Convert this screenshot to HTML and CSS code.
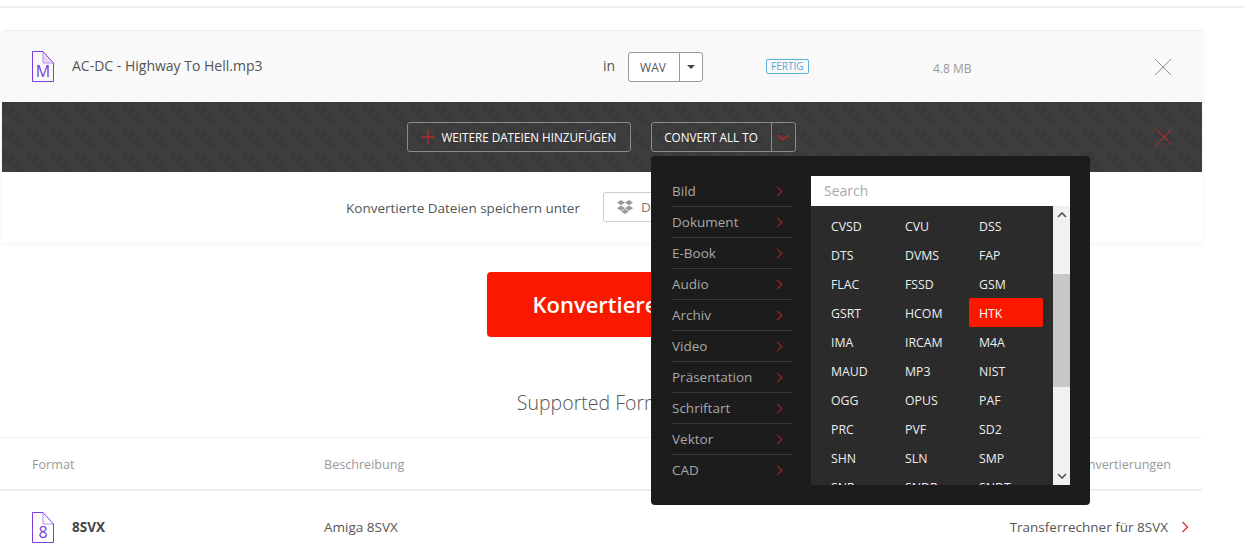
FILE: index.html
```html
<!DOCTYPE html>
<html lang="de">
<head>
    <meta charset="UTF-8">
    <title>Konvertieren</title>
    <link rel="stylesheet" href="styles.css">
</head>
<body>
    <div class="topbar"></div>

    <section class="uploader">
        <div class="file-row">
            <svg class="file-icon" width="22" height="31" viewBox="0 0 22 31">
                <path d="M11 1 L21 12 H11 Z" fill="#e6d9fa"/>
                <path d="M11 .5 V12 H21.5" fill="none" stroke="#b795ee"/>
                <path d="M.5.5 H11 L21.5 12 V30.5 H.5 Z" fill="none" stroke="#7a3de0"/>
                <text x="11" y="26" text-anchor="middle" class="file-icon-text">M</text>
            </svg>
            <span class="file-name">AC-DC - Highway To Hell.mp3</span>
            <span class="file-in">in</span>
            <div class="select-btn">
                <span class="select-value">WAV</span>
                <span class="select-caret"><i></i></span>
            </div>
            <span class="badge">FERTIG</span>
            <span class="file-size">4.8 MB</span>
            <svg class="close-icon" width="18" height="18" viewBox="0 0 18 18"><path d="M1 1 L17 17 M17 1 L1 17" stroke="#8f8f8f" fill="none"/></svg>
        </div>

        <div class="action-bar">
            <div class="action-buttons">
                <button class="dark-btn add-btn">
                    <svg width="14" height="14" viewBox="0 0 14 14"><path d="M7 0 V14 M0 7 H14" stroke="#d8262a" fill="none"/></svg>
                    WEITERE DATEIEN HINZUFÜGEN
                </button>
                <div class="dark-btn convert-btn">
                    <span class="convert-label">CONVERT ALL TO</span>
                    <span class="convert-caret">
                        <svg width="12" height="7" viewBox="0 0 12 7"><path d="M1 1 L6 6 L11 1" stroke="#c9242a" stroke-width="1.4" fill="none"/></svg>
                    </span>
                </div>
            </div>
            <svg class="close-icon" width="18" height="18" viewBox="0 0 18 18"><path d="M1 1 L17 17 M17 1 L1 17" stroke="#c9282c" fill="none"/></svg>
        </div>

        <div class="save-row">
            <span class="save-label">Konvertierte Dateien speichern unter</span>
            <button class="save-btn">
                <svg width="16" height="14" viewBox="0 0 16 14"><path d="M4 0 L8 2.6 L4 5.2 L0 2.6 Z M12 0 L16 2.6 L12 5.2 L8 2.6 Z M4 5.6 L8 8.2 L4 10.8 L0 8.2 Z M12 5.6 L16 8.2 L12 10.8 L8 8.2 Z M4.2 11.4 L8 8.9 L11.8 11.4 L8 14 Z" fill="#999"/></svg>
                Dropbox
            </button>
        </div>
    </section>

    <div class="convert-wrap">
        <button class="convert-main">Konvertieren</button>
    </div>

    <h2 class="formats-title">Supported Formats</h2>

    <section class="formats">
        <div class="formats-head">
            <span>Format</span>
            <span>Beschreibung</span>
            <span class="formats-right">Konvertierungen</span>
        </div>
        <div class="formats-row">
            <span class="format-name">
                <svg class="file-icon" width="22" height="31" viewBox="0 0 22 31">
                    <path d="M11 .5 V12 H21.5" fill="none" stroke="#b795ee"/>
                    <path d="M.5.5 H11 L21.5 12 V30.5 H.5 Z" fill="none" stroke="#7a3de0"/>
                    <text x="11" y="26" text-anchor="middle" class="file-icon-text">8</text>
                </svg>
                <b>8SVX</b>
            </span>
            <span>Amiga 8SVX</span>
            <span class="formats-right">Transferrechner für 8SVX
                <svg width="8" height="12" viewBox="0 0 8 12"><path d="M1.5 1 L6.5 6 L1.5 11" stroke="#d9363a" stroke-width="1.4" fill="none"/></svg>
            </span>
        </div>
    </section>

    <!-- dropdown opened from CONVERT ALL TO -->
    <div class="format-menu">
        <ul class="cat-list">
            <li>Bild</li>
            <li>Dokument</li>
            <li>E-Book</li>
            <li>Audio</li>
            <li>Archiv</li>
            <li>Video</li>
            <li>Präsentation</li>
            <li>Schriftart</li>
            <li>Vektor</li>
            <li>CAD</li>
        </ul>
        <div class="menu-right">
            <div class="menu-search">Search</div>
            <div class="menu-body">
                <div class="ext-grid">
                    <span>CVSD</span><span>CVU</span><span>DSS</span>
                    <span>DTS</span><span>DVMS</span><span>FAP</span>
                    <span>FLAC</span><span>FSSD</span><span>GSM</span>
                    <span>GSRT</span><span>HCOM</span><span class="active">HTK</span>
                    <span>IMA</span><span>IRCAM</span><span>M4A</span>
                    <span>MAUD</span><span>MP3</span><span>NIST</span>
                    <span>OGG</span><span>OPUS</span><span>PAF</span>
                    <span>PRC</span><span>PVF</span><span>SD2</span>
                    <span>SHN</span><span>SLN</span><span>SMP</span>
                    <span>SNR</span><span>SNDR</span><span>SNDT</span>
                </div>
                <div class="scrollbar">
                    <svg width="10" height="6" viewBox="0 0 10 6"><path d="M1 5 L5 1 L9 5" stroke="#505050" stroke-width="1.6" fill="none"/></svg>
                    <div class="scroll-thumb"></div>
                    <svg class="scroll-down" width="10" height="6" viewBox="0 0 10 6"><path d="M1 1 L5 5 L9 1" stroke="#505050" stroke-width="1.6" fill="none"/></svg>
                </div>
            </div>
        </div>
    </div>
</body>
</html>
```

FILE: styles.css
```css
* {
    box-sizing: border-box;
}
html, body {
    height: 100%;
}
body {
    position: relative;
    margin: 0;
    overflow: hidden;
    background-color: #fff;
    font-family: "Open Sans", sans-serif;
    font-size: 13px;
    color: #555;
}
.topbar {
    height: 8px;
    border-bottom: 2px solid #eee;
}
.uploader {
    width: 1200px;
    margin: 22px 0 0 2px;
    box-shadow: 0 2px 6px rgba(0, 0, 0, 0.05);
}

/* file row */
.file-row {
    display: flex;
    align-items: center;
    height: 72px;
    padding: 0 30px;
    background-color: #f9f9f9;
    border-top: 1px solid #f0f0f0;
}
.file-icon {
    flex: none;
}
.file-icon-text {
    font-family: "Open Sans", sans-serif;
    font-size: 16px;
    fill: #7a3de0;
}
.file-name {
    flex: none;
    width: 551px;
    padding-left: 18px;
    margin-top: -2px;
    margin-right: -2px;
    font-size: 14px;
    color: #555;
}
.file-in {
    width: 25px;
    margin-top: -3px;
    font-size: 14px;
}
.select-btn {
    display: flex;
    width: 75px;
    height: 30px;
    background-color: #fff;
    border: 1px solid #999;
    border-radius: 3px;
}
.select-value {
    width: 50px;
    padding-right: 2px;
    font-size: 12px;
    line-height: 29px;
    text-align: center;
}
.select-caret {
    display: flex;
    flex: 1;
    align-items: center;
    justify-content: center;
    border-left: 1px solid #999;
}
.select-caret i {
    border-top: 4px solid #444;
    border-left: 4px solid transparent;
    border-right: 4px solid transparent;
}
.badge {
    margin-left: 63px;
    padding: 0 4.5px 0 4px;
    height: 15px;
    font-size: 10px;
    line-height: 13px;
    color: #5ba5c9;
    border: 1px solid #5bb2d9;
    border-radius: 2px;
}
.file-size {
    margin-left: 124px;
    margin-top: 3px;
    font-size: 12px;
    color: #999;
}
.file-row .close-icon {
    margin-left: auto;
    margin-right: 0;
}

/* dark bar */
.action-bar {
    display: grid;
    grid-template-columns: 1fr auto 1fr;
    align-items: center;
    height: 70px;
    padding: 0 29px 0 27px;
    background-color: #3a3a3a;
    background-image:
        radial-gradient(circle at 12px 12px, transparent 3px, #363636 3.5px, #363636 4.5px, transparent 5px),
        repeating-conic-gradient(#3e3e3e 0 25%, #3a3a3a 0 50%);
    background-size: 24px 24px, 24px 24px;
}
.action-buttons {
    grid-column: 2;
    display: flex;
    gap: 20px;
}
.action-bar .close-icon {
    justify-self: end;
}
.dark-btn {
    display: flex;
    align-items: center;
    height: 30px;
    padding: 0;
    background-color: transparent;
    border: 1px solid #8a8a8a;
    border-radius: 3px;
    font-family: inherit;
    font-size: 11.7px;
    color: #fff;
}
.add-btn {
    gap: 7px;
    width: 224px;
    padding-left: 13px;
}
.convert-btn {
    width: 145px;
}
.convert-label {
    width: 119px;
    text-align: center;
}
.convert-caret {
    display: flex;
    flex: 1;
    align-items: center;
    justify-content: center;
    height: 100%;
    border-left: 1px solid #8a8a8a;
}

/* save row */
.save-row {
    display: flex;
    align-items: center;
    justify-content: center;
    gap: 23px;
    height: 70px;
    background-color: #fff;
}
.save-label {
    padding-top: 2px;
    font-size: 13.5px;
}
.save-btn {
    display: flex;
    align-items: center;
    gap: 8px;
    width: 255px;
    height: 30px;
    padding: 0 13px;
    background-color: #fff;
    border: 1px solid #ccc;
    border-radius: 3px;
    font-family: inherit;
    font-size: 13.5px;
    color: #777;
}

.convert-wrap {
    display: flex;
    justify-content: center;
    width: 1204px;
    margin-top: 30px;
}
.convert-main {
    width: 230px;
    height: 65px;
    padding-bottom: 3px;
    background-color: #fa1900;
    border: none;
    border-radius: 4px;
    font-family: inherit;
    font-size: 22px;
    font-weight: 600;
    color: #fff;
}
.formats-title {
    width: 1204px;
    margin: 52px 0 0;
    font-size: 19.5px;
    line-height: 28px;
    font-weight: 300;
    text-align: center;
    color: #555;
}

/* formats table */
.formats {
    width: 1202px;
    margin-top: 20px;
}
.formats-head, .formats-row {
    display: grid;
    grid-template-columns: 292px 1fr auto;
    padding: 0 31px 0 32px;
}
.formats-head {
    align-items: center;
    height: 54px;
    padding-top: 2px;
    font-size: 12.6px;
    color: #999;
    border-top: 1px solid #eee;
    border-bottom: 2px solid #eee;
}
.formats-row {
    align-items: center;
    height: 70px;
    padding-top: 2px;
    font-size: 13.5px;
    color: #555;
}
.format-name {
    display: flex;
    align-items: center;
    gap: 18px;
    color: #444;
}
.formats-row .formats-right {
    display: flex;
    align-items: center;
    gap: 13px;
    margin-right: -18px;
}

/* dropdown */
.format-menu {
    position: absolute;
    left: 651px;
    top: 156px;
    display: flex;
    width: 439px;
    height: 349px;
    padding: 20px 20px 20px 21px;
    background-color: #1c1c1c;
    border-radius: 4px;
}
.cat-list {
    width: 120px;
    margin: 0 19px 0 0;
    padding: 0;
    list-style: none;
}
.cat-list li {
    position: relative;
    height: 31px;
    font-size: 13.5px;
    line-height: 31px;
    color: #a8a8a8;
    border-bottom: 1px solid #3a3a3a;
}
.cat-list li:last-child {
    border-bottom: none;
}
.cat-list li::after {
    content: "";
    position: absolute;
    top: 12px;
    right: 11px;
    width: 6px;
    height: 6px;
    border-top: 1.5px solid #b3232a;
    border-right: 1.5px solid #b3232a;
    transform: rotate(45deg);
}
.menu-right {
    display: flex;
    flex-direction: column;
    flex: 1;
}
.menu-search {
    height: 30px;
    padding-left: 13px;
    background-color: #fff;
    font-size: 14px;
    line-height: 30px;
    color: #aaa;
}
.menu-body {
    display: flex;
    flex: 1;
    height: 279px;
    overflow: hidden;
    background-color: #2b2b2b;
}
.ext-grid {
    display: grid;
    grid-template-columns: repeat(3, 74px);
    grid-auto-rows: 29px;
    flex: 1;
    padding: 5px 0 0 10px;
}
.ext-grid span {
    padding: 1px 0 0 10px;
    font-size: 12.3px;
    line-height: 29px;
    color: #eee;
    border-radius: 2px;
}
.ext-grid .active {
    background-color: #fa1900;
    color: #fff;
}
.scrollbar {
    display: flex;
    flex-direction: column;
    align-items: center;
    width: 17px;
    padding-top: 6px;
    background-color: #f1f1f1;
}
.scroll-thumb {
    flex: none;
    align-self: stretch;
    height: 113px;
    margin-top: 56px;
    background-color: #c8c8c8;
}
.scroll-down {
    margin-top: auto;
    margin-bottom: 6px;
}
```
